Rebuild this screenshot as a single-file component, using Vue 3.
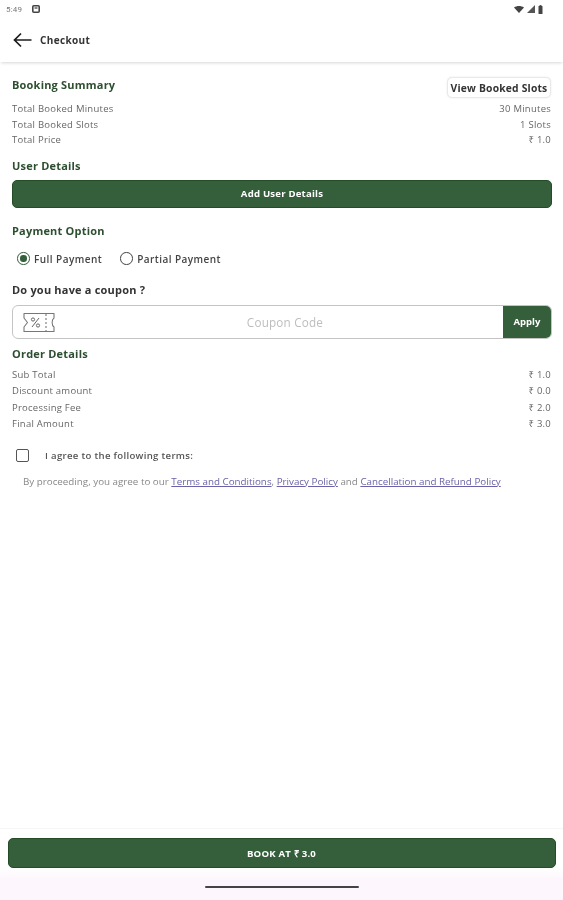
<script setup>
const summary = [
  ['Total Booked Minutes', '30 Minutes'],
  ['Total Booked Slots', '1 Slots'],
  ['Total Price', '₹ 1.0'],
]
const order = [
  ['Sub Total', '₹ 1.0'],
  ['Discount amount', '₹ 0.0'],
  ['Processing Fee', '₹ 2.0'],
  ['Final Amount', '₹ 3.0'],
]
</script>

<template>
  <div class="page">
    <div class="status">
      <div class="status-left">
        <span class="time">5:49</span>
        <svg width="8" height="8" viewBox="0 0 8 8"><rect x="0.8" y="0.8" width="6.4" height="6.4" rx="1" fill="none" stroke="#444" stroke-width="1.6" /><rect x="2.5" y="2" width="3" height="2" fill="#888" /></svg>
      </div>
      <div class="status-right">
        <svg width="10" height="7" viewBox="0 0 10 7"><path d="M0 1.5 C2.8 -0.5 7.2 -0.5 10 1.5 L5 7 Z" fill="#444" /></svg>
        <svg width="8" height="8" viewBox="0 0 8 8"><path d="M8 0 V8 H0 Z" fill="#555" /></svg>
        <svg width="5" height="9" viewBox="0 0 5 9"><rect x="1.5" y="0" width="2" height="1" fill="#555" /><rect x="0.5" y="1" width="4" height="8" rx="0.6" fill="#444" /></svg>
      </div>
    </div>

    <header class="topbar">
      <svg class="back" width="19" height="16" viewBox="0 0 19 16"><path d="M18.5 8 H1.5 M8 1.5 L1.5 8 L8 14.5" fill="none" stroke="#1c1c1c" stroke-width="1.7" /></svg>
      <span class="title">Checkout</span>
    </header>

    <main class="content">
      <div class="summary-head">
        <h2 class="heading">Booking Summary</h2>
        <button class="slots-btn">View Booked Slots</button>
      </div>
      <div class="rows summary-rows">
        <div v-for="r in summary" :key="r[0]" class="row"><span>{{ r[0] }}</span><span>{{ r[1] }}</span></div>
      </div>

      <h2 class="heading user-heading">User Details</h2>
      <button class="primary add-user">Add User Details</button>

      <h2 class="heading payment-heading">Payment Option</h2>
      <div class="radios">
        <label class="radio"><span class="dot on"></span>Full Payment</label>
        <label class="radio"><span class="dot"></span>Partial Payment</label>
      </div>

      <h2 class="heading coupon-heading">Do you have a coupon ?</h2>
      <div class="coupon">
        <svg class="ticket" width="34" height="21" viewBox="0 0 34 21">
          <path d="M2 1.5 H32 V6 C29.5 7.5 29.5 13.5 32 15 V19.5 H2 V15 L5.5 10.5 L2 6 Z" fill="none" stroke="#777" stroke-width="1.1" stroke-linejoin="round" />
          <path d="M24 2 V20" stroke="#777" stroke-width="1.1" stroke-dasharray="2 2" />
          <path d="M17 6 L10 15" stroke="#666" stroke-width="1" />
          <circle cx="11" cy="7.5" r="1.6" fill="none" stroke="#666" />
          <circle cx="16" cy="13.5" r="1.6" fill="none" stroke="#666" />
        </svg>
        <span class="placeholder">Coupon Code</span>
        <button class="apply">Apply</button>
      </div>

      <h2 class="heading order-heading">Order Details</h2>
      <div class="rows order-rows">
        <div v-for="r in order" :key="r[0]" class="row"><span>{{ r[0] }}</span><span>{{ r[1] }}</span></div>
      </div>

      <div class="agree">
        <span class="check"></span>
        <span>I agree to the following terms:</span>
      </div>
      <p class="terms">
        By proceeding, you agree to our <a>Terms and Conditions</a>, <a>Privacy Policy</a> and <a>Cancellation and Refund Policy</a>
      </p>
    </main>

    <footer class="footer">
      <button class="primary book">BOOK AT ₹ 3.0</button>
      <div class="nav"><span class="home"></span></div>
    </footer>
  </div>
</template>

<style>
html, body { margin: 0; background: #fff; }
</style>

<style scoped>
.page {
  width: 563px;
  height: 900px;
  display: flex;
  flex-direction: column;
  overflow: hidden;
  background: #fff;
  font-family: "Open Sans", "Noto Sans", sans-serif;
  color: #444;
  filter: blur(0.6px);
}
.status {
  height: 18px;
  padding: 0 20px 0 6px;
  display: flex;
  justify-content: space-between;
  align-items: center;
}
.status-left, .status-right { display: flex; align-items: center; }
.status-left { gap: 10px; }
.status-right { gap: 3px; }
.time { font-size: 8px; color: #777; font-family: Roboto, sans-serif; letter-spacing: 0.2px; }
.topbar {
  height: 44px;
  display: flex;
  align-items: center;
  padding-left: 13px;
  gap: 8px;
  box-shadow: 0 2px 3px -1px rgba(0, 0, 0, 0.16);
}
.back { display: block; }
.title { font-size: 10px; font-weight: 700; color: #333; letter-spacing: 0.35px; }
.content { flex: 1; padding: 0 11px 0 12px; display: flex; flex-direction: column; }
.heading { margin: 0; font-size: 11px; line-height: 14px; font-weight: 700; color: #2d4f30; letter-spacing: 0.2px; }
.summary-head { display: flex; justify-content: space-between; align-items: flex-start; padding-top: 16px; height: 22px; }
.slots-btn {
  margin: -1px 1px 0 0;
  width: 104px;
  height: 21px;
  padding: 0;
  background: #fff;
  border: 1px solid #e9e9e9;
  border-radius: 5px;
  box-shadow: 0 0 2px rgba(0, 0, 0, 0.1);
  font: 700 10.3px "Open Sans", sans-serif;
  color: #333;
  letter-spacing: 0.2px;
}
.rows { display: flex; flex-direction: column; padding-right: 1px; }
.row {
  display: flex;
  justify-content: space-between;
  font-size: 9.5px;
  color: #666;
  letter-spacing: 0.25px;
}
.summary-rows { margin-top: 1px; }
.summary-rows .row { height: 15.5px; line-height: 15.5px; }
.user-heading { margin-top: 11px; }
.primary {
  display: block;
  border: 1px solid #244d27;
  background: #355e3b;
  color: #fff;
  font: 700 9.6px "Open Sans", sans-serif;
  letter-spacing: 0.2px;
  border-radius: 5px;
  padding: 0;
}
.add-user { width: 100%; height: 28px; margin-top: 7px; }
.payment-heading { margin-top: 16px; }
.radios { display: flex; margin: 14px 0 0 5px; gap: 18px; height: 14px; }
.radio { display: flex; align-items: center; gap: 4.5px; font-size: 10px; font-weight: 600; color: #444; letter-spacing: 0.45px; }
.dot { width: 10.5px; height: 10.5px; border: 1.5px solid #444; border-radius: 50%; display: block; position: relative; }
.dot.on { border-color: #355e3b; }
.dot.on::after { content: ""; position: absolute; inset: 2px; border-radius: 50%; background: #355e3b; }
.coupon-heading { margin-top: 17px; color: #333; }
.coupon {
  margin-top: 8.5px;
  height: 33.5px;
  box-sizing: border-box;
  border: 1px solid #c4c4c4;
  border-radius: 6px;
  display: flex;
  align-items: center;
  position: relative;
  overflow: hidden;
}
.ticket { position: absolute; left: 9px; top: 5.5px; }
.placeholder { flex: 1; padding-left: 54px; text-align: center; font-size: 11.7px; color: #bdbdbd; letter-spacing: 0.2px; }
.apply {
  width: 48px;
  height: 100%;
  border: 0;
  padding: 0;
  background: #355e3b;
  color: #fff;
  font: 700 9.5px "Open Sans", sans-serif;
}
.order-heading { margin-top: 8px; }
.order-rows { margin-top: 6px; }
.order-rows .row { height: 16.5px; line-height: 16.5px; }
.agree { display: flex; align-items: center; margin: 15px 0 0 4px; gap: 16px; font-size: 9.6px; font-weight: 600; color: #555; letter-spacing: 0.3px; height: 16px; }
.check { width: 11px; height: 11px; border: 1.5px solid #555; border-radius: 2px; display: block; }
.terms { margin: 12px 0 0 11px; font-size: 9.8px; line-height: 12px; color: #888; white-space: nowrap; }
.terms a { color: #6a62a8; text-decoration: underline; }
.book { width: 548px; height: 30px; margin: 0 auto; }
.footer { flex: none; display: flex; flex-direction: column; padding-top: 9px; border-top: 1px solid #f6f6f6; background: linear-gradient(#fff 38px, #fdf7fd 50px); }
.nav { height: 32px; display: flex; justify-content: center; padding-top: 18px; box-sizing: border-box; }
.home { width: 154px; height: 2px; background: #444; border-radius: 1px; }
</style>
